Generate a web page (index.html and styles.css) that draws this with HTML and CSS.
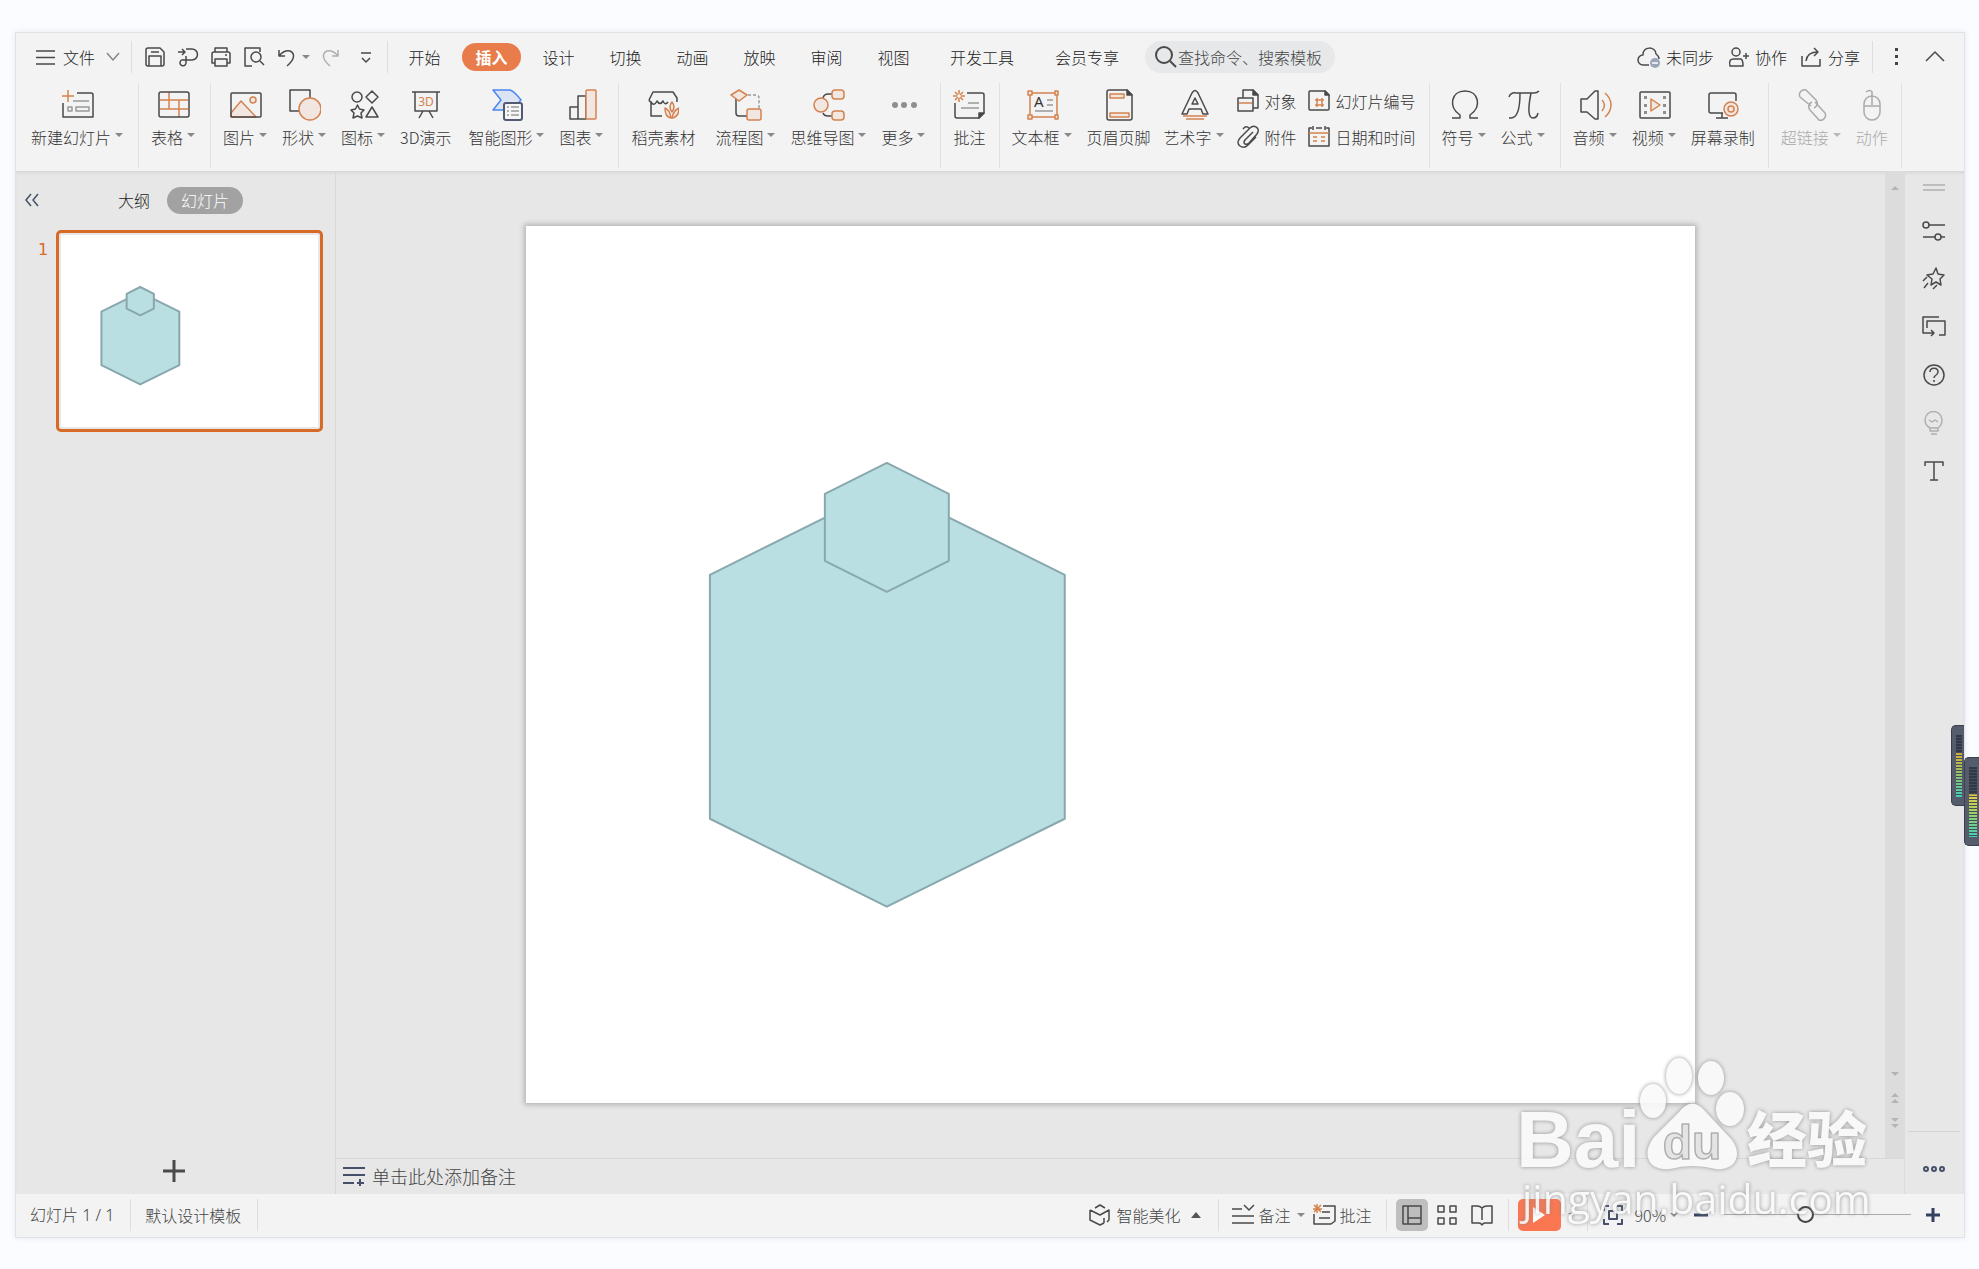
FILE: index.html
```html
<!DOCTYPE html>
<html lang="zh-CN">
<head>
<meta charset="utf-8">
<title>演示文稿</title>
<link rel="stylesheet" href="styles.css">
</head>
<body>
<svg class="defs" aria-hidden="true">
  <symbol id="drawing" viewBox="0 0 1170 877">
    <path class="shape" d="M361 261 539 349V593L361 681 184 593V349Z"/>
    <path class="shape" d="M361 237 423 268V335L361 366 299 335V268Z"/>
  </symbol>
</svg>

<div class="window">
  <header class="topbar">
    <button class="file"><svg class="i24" viewBox="0 0 24 24"><path d="M2 6H21M2 12.500H21M2 19H21"/></svg><span>文件</span><svg class="i16 mute" viewBox="0 0 16 16"><path d="M2 4 8 11 14 4"/></svg></button>
    <span class="sep"></span>
    <div class="quick">
      <button aria-label="保存"><svg class="i24" viewBox="0 0 24 24"><path d="M5 3H17L21 7V19Q21 21 19 21H5Q3 21 3 19V5Q3 3 5 3ZM6 21V11H18V21M8 7H16"/></svg></button>
      <button aria-label="输出"><svg class="i24" viewBox="0 0 24 24"><path d="M2 7H9M6 4 9 7 6 10M10 4H16A5 5 0 0 1 16 15H8A3 3 0 1 0 10 18V11"/></svg></button>
      <button aria-label="打印"><svg class="i24" viewBox="0 0 24 24"><path d="M6 7V3H18V7M6 18H3V9Q3 7 5 7H19Q21 7 21 9V18H18M6 14H18V21H6ZM16 10H18"/></svg></button>
      <button aria-label="打印预览"><svg class="i24" viewBox="0 0 24 24"><path d="M10 21H3V3H18V7M18 16 22 20"/><circle cx="14" cy="12" r="5"/></svg></button>
      <button class="undo" aria-label="撤销"><svg class="i24" viewBox="0 0 24 24"><path d="M4 5V11H10M4 11Q9 5 15 6C21 9 19 15 12 21"/></svg><i class="caret"></i></button>
      <button class="mute" aria-label="恢复"><svg class="i24" viewBox="0 0 24 24"><path d="M19 5V11H13M19 11Q14 5 8 6C2 9 4 15 11 21"/></svg></button>
      <button class="expand" aria-label="自定义"><svg class="i24" viewBox="0 0 24 24"><path d="M7 8H17M8 13 12 17 16 13"/></svg></button>
    </div>
    <span class="sep"></span>
    <nav class="tabs">
      <button>开始</button><button class="on">插入</button><button>设计</button><button>切换</button><button>动画</button><button>放映</button><button>审阅</button><button>视图</button><button class="wide">开发工具</button><button class="wide">会员专享</button>
    </nav>
    <label class="search"><svg class="i24" viewBox="0 0 24 24"><g class="thick"><circle cx="10" cy="10" r="8"/><path d="M16 16 22 22"/></g></svg><input type="text" placeholder="查找命令、搜索模板" aria-label="查找命令、搜索模板"></label>
    <div class="account">
      <button><svg class="i24" viewBox="0 0 24 24"><path d="M12 20H6A5 5 0 0 1 6 10C5 1 19 1 19 9Q22 11 22 14"/><circle class="badge" cx="18" cy="18" r="5"/><path class="wline" d="M15 18H21"/></svg>未同步</button>
      <button><svg class="i24" viewBox="0 0 24 24"><circle cx="10" cy="7" r="4"/><path d="M15 21H4Q2 13 9 14H15Q17 15 17 21ZM17 11H23M20 8V14"/></svg>协作</button>
      <button><svg class="i24" viewBox="0 0 24 24"><path d="M3 11V21H21V14M7 16Q8 7 19 7M15 3 19 7 15 11"/></svg>分享</button>
      <span class="sep"></span>
      <button class="dots" aria-label="更多"><svg class="i24" viewBox="0 0 24 24"><path class="dot" d="M11 3h3v3h-3zM11 10h3v3h-3zM11 17h3v3h-3z"/></svg></button>
      <button aria-label="收起"><svg class="i24" viewBox="0 0 24 24"><path d="M3 16 12 7 21 16"/></svg></button>
    </div>
  </header>

  <div class="ribbon">
    <div class="group">
      <button class="tool"><svg class="i32" viewBox="0 0 32 32"><path d="M15 4H29Q31 4 31 6V28H1V14"/><path class="g" d="M11 12H27M6 18H10V22H6ZM14 18H27V22H14Z"/><path class="o" d="M6 1V13M0 7H12"/></svg><span>新建幻灯片<i class="caret"></i></span></button>
    </div>
    <div class="group">
      <button class="tool"><svg class="i32" viewBox="0 0 32 32"><path class="o" d="M2 11H30M2 20H30M11 3V20M21 11V28"/><rect x="1" y="3" width="30" height="25" rx="2"/></svg><span>表格<i class="caret"></i></span></button>
    </div>
    <div class="group">
      <button class="tool"><svg class="i32" viewBox="0 0 32 32"><path class="of" d="M1 24 11 12 26 28H1Z"/><circle class="of" cx="23" cy="11" r="3"/><rect x="1" y="4" width="30" height="24" rx="1"/></svg><span>图片<i class="caret"></i></span></button>
      <button class="tool"><svg class="i32" viewBox="0 0 32 32"><path d="M1 1H21V22H1Z"/><circle class="of" cx="21" cy="20" r="11"/></svg><span>形状<i class="caret"></i></span></button>
      <button class="tool"><svg class="i32" viewBox="0 0 32 32"><circle cx="9" cy="8" r="5"/><path d="M24 2 30 8 24 14 18 8ZM24 18 30 28H18ZM9.500 16 11.500 20 16 21 13 24 14 29 9.500 27 5 29 6 24 3 21 7.500 20Z"/></svg><span>图标<i class="caret"></i></span></button>
      <button class="tool mid"><svg class="i32" viewBox="0 0 32 32"><path d="M2 3H30M5 3V22H27V3M13 22 9 29M19 22 23 29"/><text class="ot" x="16" y="17" text-anchor="middle" font-size="12">3D</text></svg><span>3D演示</span></button>
      <button class="tool"><svg class="i32" viewBox="0 0 32 32"><path class="bl" d="M2 1H19Q23 2 30 11L21 21H2L10 11Z"/><rect class="doc" x="13" y="14" width="18" height="17" rx="2"/><path class="g" d="M16 18H18M20 18H28M16 22H18M20 22H28M16 26H18M20 26H28"/></svg><span>智能图形<i class="caret"></i></span></button>
      <button class="tool"><svg class="i32" viewBox="0 0 32 32"><path d="M4 18H12V30H4ZM12 30V7H20V30Z"/><rect class="of" x="20" y="1" width="10" height="29" rx="1"/></svg><span>图表<i class="caret"></i></span></button>
    </div>
    <div class="group">
      <button class="tool far"><svg class="i32" viewBox="0 0 32 32"><path d="M15 27H4V13Q1 12 3 9L6 3H26L30 9V13M4 13Q7 18 10 12Q13 17 16 12Q18 17 21 13"/><path class="of" d="M25 13Q29 18 25 23Q21 18 25 13ZM18 19Q23 21 24 29Q18 28 18 19ZM32 19Q32 28 25 29Q26 22 32 19Z"/></svg><span>稻壳素材</span></button>
      <button class="tool"><svg class="i32" viewBox="0 0 32 32"><path class="g dash" d="M18 6H26Q29 6 29 9V20"/><path d="M6 9V24Q6 27 9 27H17"/><path class="of" d="M9 1 17 6 9 12 1 6Z"/><rect class="of" x="17" y="20" width="14" height="11" rx="2"/></svg><span>流程图<i class="caret"></i></span></button>
      <button class="tool"><svg class="i32" viewBox="0 0 32 32"><path d="M10 9Q11 5 15 5H20M10 24Q11 27 15 27H20"/><circle class="of" cx="8" cy="16" r="7"/><rect class="of" x="19" y="1" width="12" height="9" rx="3"/><rect class="of" x="19" y="22" width="12" height="9" rx="3"/></svg><span>思维导图<i class="caret"></i></span></button>
      <button class="tool"><svg class="i32" viewBox="0 0 32 32"><g class="gs"><circle cx="7" cy="16" r="3"/><circle cx="16" cy="16" r="3"/><circle cx="26" cy="16" r="3"/></g></svg><span>更多<i class="caret"></i></span></button>
    </div>
    <div class="group">
      <button class="tool"><svg class="i32" viewBox="0 0 32 32"><path d="M14 4H29Q31 4 31 6V24L26 29H4Q2 29 2 27V14"/><path class="solid" d="M31 24H26V29Z"/><path class="g" d="M15 14H26M8 19H26"/><path class="o" d="M6 1V5M6 9V13M0 7H4M8 7H12M2 3 5 6M10 3 7 6M2 11 5 8M10 11 7 8"/></svg><span>批注</span></button>
    </div>
    <div class="group">
      <button class="tool"><svg class="i32" viewBox="0 0 32 32"><rect class="o" x="3" y="4" width="27" height="24"/><path class="of" d="M1 2H5V6H1ZM28 2H31V6H28ZM1 26H5V30H1ZM28 26H31V30H28Z"/><text class="kt" x="7" y="18" font-size="15">A</text><path class="g" d="M20 11H26M20 16H26M8 22H26"/></svg><span>文本框<i class="caret"></i></span></button>
      <button class="tool"><svg class="i32" viewBox="0 0 32 32"><path d="M6 1H24L29 6V29Q29 31 27 31H6Q4 31 4 29V3Q4 1 6 1Z"/><path class="solid" d="M24 1V6H29Z"/><path class="of" d="M7 5H21V9H7ZM7 24H26V28H7Z"/></svg><span>页眉页脚</span></button>
      <button class="tool"><svg class="i32" viewBox="0 0 32 32"><path d="M3 25 13 4Q16 -1 19 4L29 25H24L22 20H10L8 25ZM16 9 19 15H13Z"/><path class="o" d="M4 27H28M7 30H25"/></svg><span>艺术字<i class="caret"></i></span></button>
      <div class="minis">
        <button><svg class="i24" viewBox="0 0 24 24"><path d="M7 9V1H17L22 6V19H17M2 9H17V22H2Z"/><path class="solid" d="M17 1V6H22Z"/><path class="o" d="M3 14H16"/></svg>对象</button>
        <button><svg class="i24" viewBox="0 0 24 24"><path d="M18 2H3Q2 2 2 3V20Q2 21 3 21H21Q22 21 22 20V6Z"/><path class="solid" d="M18 2V6H22Z"/><path class="o" d="M10 9V18M15 9V18M8 11H17M8 16H17"/></svg>幻灯片编号</button>
        <button><svg class="i24" viewBox="0 0 24 24"><path d="M17 7 9 15Q7 18 9 19Q11 20 13 18L21 9Q24 4 20 2Q17 0 14 3L4 13Q0 18 4 21Q8 24 12 20L20 12M13 3Q10 0 7 4"/></svg>附件</button>
        <button><svg class="i24" viewBox="0 0 24 24"><path d="M5 3H2V21H22V3H19M9 3H15M6 1V5M18 1V5"/><path class="o" d="M2 8H22M6 12H10M14 12H18M6 16H10M14 16H18"/></svg>日期和时间</button>
      </div>
    </div>
    <div class="group">
      <button class="tool"><svg class="i32" viewBox="0 0 32 32"><path d="M3 29H11V26C-1 18 2 2 16 2S33 18 21 26V29H29"/></svg><span>符号<i class="caret"></i></span></button>
      <button class="tool"><svg class="i32" viewBox="0 0 32 32"><path d="M1 8Q3 3 8 4H26Q29 4 31 2M12 4Q12 29 3 29H1M23 4Q18 29 25 29Q29 29 30 24"/></svg><span>公式<i class="caret"></i></span></button>
    </div>
    <div class="group">
      <button class="tool"><svg class="i32" viewBox="0 0 32 32"><path d="M1 10H7L15 2H18V30H15L7 23H1Z"/><path class="o" d="M22 11Q27 16 22 22M25 4C33 11 33 21 25 28"/></svg><span>音频<i class="caret"></i></span></button>
      <button class="tool"><svg class="i32" viewBox="0 0 32 32"><rect x="1" y="3" width="30" height="26" rx="1"/><path class="of" d="M12 10V22L21 16Z"/><path class="gs" d="M5 7H8V10H5ZM5 15H8V18H5ZM5 22H8V25H5ZM24 7H27V10H24ZM24 15H27V18H24ZM24 22H27V25H24Z"/></svg><span>视频<i class="caret"></i></span></button>
      <button class="tool"><svg class="i32" viewBox="0 0 32 32"><path d="M16 24H4Q2 24 2 22V6Q2 4 4 4H27Q29 4 29 6V12M15 24V29M9 29H21"/><circle class="of" cx="24" cy="20" r="7"/><circle class="o" cx="24" cy="20" r="3"/></svg><span>屏幕录制</span></button>
    </div>
    <div class="group off">
      <button class="tool" disabled><svg class="i32" viewBox="0 0 32 32"><path d="M15 17 4 8A5 5 0 0 1 10 1L20 11A5 5 0 0 1 18 19M19 13 29 24A5 5 0 0 1 23 31L14 21A5 5 0 0 1 16 13"/></svg><span>超链接<i class="caret"></i></span></button>
      <button class="tool" disabled><svg class="i32" viewBox="0 0 32 32"><path d="M16 16V3Q14 0 10 3M8 17H24"/><rect x="8" y="7" width="16" height="24" rx="8"/></svg><span>动作</span></button>
    </div>
  </div>

  <main class="work">
    <aside class="side">
      <div class="sidehead">
        <button class="fold" aria-label="折叠"><svg class="i16 navy" viewBox="0 0 16 16"><path d="M7 2 2 8 7 14M14 2 9 8 14 14"/></svg></button>
        <button>大纲</button><button class="pill">幻灯片</button>
      </div>
      <div class="thumbrow"><span class="num">1</span><div class="thumb"><svg viewBox="0 0 1170 877"><use href="#drawing"/></svg></div></div>
      <button class="add" aria-label="新建"><svg class="i24" viewBox="0 0 24 24"><path d="M12 1V23M1 12H23"/></svg></button>
    </aside>
    <section class="editor">
      <div class="stage">
        <div class="canvas"><svg class="slide" viewBox="0 0 1170 877"><use href="#drawing"/></svg></div>
        <div class="scroll"><svg class="i16" viewBox="0 0 16 16"><path d="M4 10 8 6 12 10Z"/></svg>
          <span class="downs"><svg class="i16" viewBox="0 0 16 16"><path d="M4 6 8 10 12 6Z"/></svg><svg class="i16" viewBox="0 0 16 16"><path d="M4 6 8 2 12 6ZM4 12 8 8 12 12Z"/></svg><svg class="i16" viewBox="0 0 16 16"><path d="M4 2 8 6 12 2ZM4 8 8 12 12 8Z"/></svg></span>
        </div>
      </div>
      <div class="notes"><svg class="i24" viewBox="0 0 24 24"><g class="navyline"><path d="M1 4H23M1 11H23M1 19H12M15 19H22M18 15V22"/></g></svg>单击此处添加备注</div>
    </section>
    <aside class="rail">
      <svg class="i24 mute" viewBox="0 0 24 24"><path d="M1 9H23M1 14H23"/></svg>
      <button aria-label="属性"><svg class="i24" viewBox="0 0 24 24"><path d="M7 6H23M1 18H13M19 18H23"/><circle cx="4" cy="6" r="3"/><circle cx="16" cy="18" r="3"/></svg></button>
      <button aria-label="动画"><svg class="i24" viewBox="0 0 24 24"><path d="M14 1 16 7 22 8 18 12 19 18 14 15 9 18 10 12 5 8 11 7ZM5 10 1 14M6 16 2 21M15 18 11 22"/></svg></button>
      <button aria-label="切换"><svg class="i24" viewBox="0 0 24 24"><path d="M17 2H1V18H12M9 15 12 18 9 21M5 13V6H23V20H17"/></svg></button>
      <button aria-label="帮助"><svg class="i24" viewBox="0 0 24 24"><circle cx="12" cy="12" r="10"/><path d="M8 9C8 4 16 4 16 9Q16 11 13 13Q12 14 12 15M12 17V19"/></svg></button>
      <button class="mute" aria-label="提示"><svg class="i24" viewBox="0 0 24 24"><path d="M8 17Q3 14 3 9A8 8 0 0 1 20 9Q20 14 16 17ZM8 17V20H16V17M9 23H15M7 9 10 11 13 9 16 11"/></svg></button>
      <button aria-label="字体"><svg class="i24" viewBox="0 0 24 24"><path d="M3 7V3H21V7M12 3V21M8 21H16"/></svg></button>
      <button class="railmore" aria-label="更多"><svg class="i24" viewBox="0 0 24 24"><g class="navyline"><circle cx="4" cy="12" r="2"/><circle cx="12" cy="12" r="2"/><circle cx="20" cy="12" r="2"/></g></svg></button>
    </aside>
  </main>

  <footer class="status">
    <span class="page">幻灯片 1 / 1</span><span class="sep"></span><span>默认设计模板</span><span class="sep"></span>
    <div class="ctl">
      <button class="beauty"><svg class="i24" viewBox="0 0 24 24"><path d="M7 5 12 2 17 5M2 7 12 12 21 7V17L19 19M2 7V17L12 22 16 20M16 20V15"/></svg>智能美化<i class="caret up"></i></button>
      <span class="sep"></span>
      <button class="memo"><svg class="i24" viewBox="0 0 24 24"><path d="M1 6H11M1 13H23M1 20H23M13 2 18 7 23 2"/></svg>备注<i class="caret"></i></button>
      <button class="comment"><svg class="i24" viewBox="0 0 24 24"><path d="M11 3H23V18L19 21H2V11M10 9H18M7 15H18"/><path class="o" d="M5 1V10M1 6H10M2 2 9 9M9 2 2 9"/></svg>批注</button>
      <span class="sep"></span>
      <button class="view on" aria-label="普通视图"><svg class="i24" viewBox="0 0 24 24"><path d="M3 3H21V21H3ZM8 3V21M8 15H21"/></svg></button>
      <button class="view" aria-label="幻灯片浏览"><svg class="i24" viewBox="0 0 24 24"><path d="M3 3H9V9H3ZM15 3H21V9H15ZM3 15H9V21H3ZM15 15H21V21H15Z"/></svg></button>
      <button class="view" aria-label="阅读视图"><svg class="i24" viewBox="0 0 24 24"><path d="M12 5Q10 3 7 3H2V20H9Q11 20 12 22Q13 20 15 20H22V3H17Q14 3 12 5V17"/></svg></button>
      <span class="sep"></span>
      <button class="play" aria-label="播放"><svg class="i24" viewBox="0 0 24 24"><path d="M6 4V20L18 12Z"/></svg></button><i class="caret"></i>
      <span class="sep"></span>
      <button class="fit" aria-label="适应窗口"><svg class="i24" viewBox="0 0 24 24"><g class="navyline"><path d="M3 8V3H8M16 3H21V8M3 16V21H8M16 21H21V16M8 8H16V16H8Z"/></g></svg></button>
      <button class="pct">90%<i class="caret"></i></button>
      <button aria-label="缩小"><svg class="i16" viewBox="0 0 16 16"><path class="zoomline" d="M1 8H15"/></svg></button>
      <input class="zoom" type="range" min="0" max="100" value="43" aria-label="缩放">
      <button aria-label="放大"><svg class="i16" viewBox="0 0 16 16"><path class="zoomline" d="M1 8H15M8 1V15"/></svg></button>
    </div>
  </footer>
</div>

<div class="meter inner"><i></i></div>
<div class="meter outer"><i></i></div>

<svg class="mark" viewBox="0 0 370 190" aria-hidden="true">
  <text x="6" y="117" class="latin" font-size="80">Bai</text>
  <ellipse cx="143" cy="51" rx="13" ry="17"/><ellipse cx="169" cy="26" rx="13" ry="18"/><ellipse cx="201" cy="28" rx="13" ry="17"/><ellipse cx="220" cy="59" rx="14" ry="17"/>
  <path d="M170 61Q182 46 195 61L222 90C234 107 223 121 206 119Q182 113 160 119C138 121 131 104 144 87Z"/>
  <text x="182" y="109" class="du" text-anchor="middle" font-size="48">du</text>
  <text x="237" y="112" class="han" font-size="60">经验</text>
  <text x="12" y="164" class="site" font-size="41">jingyan.baidu.com</text>
</svg>
</body>
</html>
```
FILE: styles.css
```css
* { box-sizing: border-box; }
body {
  margin: 0;
  position: relative;
  min-height: 100vh;
  padding: 32px 14px 31px 15px;
  display: flex;
  background: #fbfcff;
  color: #222;
  font: 300 16px/24px "Noto Sans CJK SC", sans-serif;
  overflow-x: hidden;
}
button, input { font: inherit; color: inherit; }
button { display: flex; align-items: center; margin: 0; padding: 0; border: 0; background: none; white-space: nowrap; }
svg { display: block; flex: none; fill: none; stroke: #4a4a4a; stroke-width: 1.5; stroke-linejoin: round; }
.defs { position: absolute; width: 0; height: 0; }
.i16 { width: 16px; height: 16px; }
.i24 { width: 24px; height: 24px; }
.i32 { width: 32px; height: 32px; }
svg.mute, .mute svg { stroke: #b0b0b0; }
.file svg.mute { stroke: #888; }
.navy, .navyline { stroke: #46506a; }
.navyline { stroke-width: 2; }
.thick { stroke-width: 2; }
.solid { fill: #444; }
.dot { fill: #444; stroke: none; }
.g { stroke: #999; }
.gs { fill: #8e8e8e; stroke: none; }
.o { stroke: #d4824f; }
.of { stroke: #d4824f; fill: #f1e6e0; }
.ot { fill: #d4824f; stroke: none; font-family: "Noto Sans", sans-serif; font-weight: 400; }
.kt { fill: #333; stroke: none; font-family: "Noto Sans", sans-serif; font-weight: 400; }
.bl { stroke: #4a87f0; fill: #dce4f4; }
.doc { stroke: #505a70; fill: #f5f5f5; stroke-width: 2; }
.dash { stroke-dasharray: 3 2; }
.badge { fill: #9ba5b8; stroke: none; }
.wline { stroke: #fff; }
.shape { fill: #badfe2; stroke: #88a8ac; stroke-width: 2; vector-effect: non-scaling-stroke; }
.caret { display: inline-block; border: 4px solid transparent; border-top-color: #888; border-bottom: 0; }
.caret.up { border-top: 0; border-bottom: 6px solid #555; border-left-width: 5px; border-right-width: 5px; }
.sep { width: 1px; height: 32px; background: #dedede; flex: none; }

.window {
  flex: 1;
  min-width: 0;
  display: flex;
  flex-direction: column;
  border: 1px solid #e0e3e3;
  background: #f3f3f3;
  box-shadow: 0 0 6px #e6e9ee;
}

.topbar { display: flex; align-items: center; height: 48px; padding: 0 17px 0 18px; }
.file span { margin: 0 10px 0 5px; }
.file { margin-right: 10px; }
.quick { display: flex; gap: 9px; margin: 0 9px 0 11px; }
.quick .undo { gap: 3px; }
.quick .expand { margin-left: 2px; }
.tabs { display: flex; gap: 8px; margin-left: 7px; }
.tabs button { height: 28px; padding: 0 13px; border-radius: 14px; }
.tabs button:not(.wide) { width: 59px; justify-content: center; }
.tabs .wide { margin-left: 5px; padding: 0 14px; }
.tabs .on { background: #e87c4b; color: #fff; font-weight: 700; }
.search { display: flex; align-items: center; width: 190px; height: 32px; margin-left: 12px; padding: 0 9px; border-radius: 16px; background: #e6e8ea; }
.search input { flex: 1; min-width: 0; padding: 0; border: 0; background: none; outline: 0; }
.search input::placeholder { color: #444; opacity: 1; }
.account { display: flex; align-items: center; margin-left: auto; gap: 12px; }
.account button { gap: 5px; }
.account .dots { margin: 0 3px 0 -1px; }

.ribbon { display: flex; height: 90px; padding: 2px 0 3px 3px; }
.group { display: flex; align-items: flex-start; gap: 13px; padding: 6px 13px 0 12px; border-right: 1px solid #e0e0e0; }
.tool { flex-direction: column; gap: 4px; color: #333; }
.tool.mid { margin-right: 4px; }
.tool.far { margin-right: 7px; }
.tool span { display: flex; align-items: center; }
.tool .caret { margin: 0 2px 4px 4px; }
.minis { display: grid; grid-template-columns: auto auto; gap: 12px 10px; padding-top: 0; margin-left: -3px; }
.minis button { gap: 5px; color: #333; }
.off .tool { color: #aaa; }
.off svg { stroke: #aaa; }
.off .caret { border-top-color: #b8b8b8; }

.work { flex: 1; display: flex; background: #e7e7e7; box-shadow: inset 0 3px 3px -1px #d6d6d6; }
.side { width: 320px; flex: none; display: flex; flex-direction: column; border-right: 1px solid #d8d8d8; padding: 15px 12px 11px 8px; }
.sidehead { display: flex; align-items: center; height: 28px; }
.fold { width: 77px; }
.sidehead button + button { margin-left: 17px; }
.sidehead .pill { height: 27px; padding: 0 14px; border-radius: 14px; background: #a2a2a2; color: #fff; }
.thumbrow { display: flex; gap: 8px; margin: 16px 0 auto 14px; }
.num { color: #d86a28; font: 16px/40px "DejaVu Sans", sans-serif; }
.thumb { flex: 1; padding: 2px; border: 3px solid #d86a28; border-radius: 5px; }
.thumb svg { width: 100%; background: #fff; }
.add { align-self: center; }
.add svg { stroke-width: 3; }
.editor { flex: 1; min-width: 0; display: flex; flex-direction: column; }
.stage { flex: 1; display: flex; border-bottom: 1px solid #d8d8d8; }
.canvas { flex: 1; display: flex; align-items: center; justify-content: center; }
.slide { width: 75.5%; background: #fff; box-shadow: 0 0 5px 2px #b4b4b4; }
.scroll { width: 19px; background: #dcdcdc; display: flex; flex-direction: column; align-items: center; justify-content: space-between; padding: 9px 0 26px; }
.scroll svg { fill: #b4b4b4; stroke: none; }
.downs { display: grid; gap: 9px; }
.notes { display: flex; align-items: center; gap: 6px; height: 35px; padding: 0 0 2px 6px; color: #444; font-size: 18px; }
.rail { width: 60px; flex: none; display: flex; flex-direction: column; align-items: center; gap: 24px; padding: 5px 2px 13px 0; border-left: 1px solid #dcdcdc; }
.rail > svg { margin-bottom: -5px; }
.railmore { margin-top: auto; padding: 25px 14px 0; border-top: 1px solid #d4d4d4; }

.status { display: flex; align-items: center; height: 43px; padding: 0 23px 2px 14px; color: #444; }
.status > .sep { margin: 0 14px 0 16px; }
.page { font-family: "Noto Sans", "Noto Sans CJK SC", sans-serif; }
.ctl { display: flex; align-items: center; margin-left: auto; }
.ctl button { gap: 4px; }
.beauty .caret { margin-left: 7px; }
.beauty { margin-right: 17px; }
.memo { margin: 0 7px 0 12px; }
.memo svg { margin-right: -1px; }
.memo .caret { margin-left: 2px; }
.comment { margin-right: 14px; }
.view { width: 32px; height: 32px; justify-content: center; border-radius: 5px; margin-left: 3px; }
.view.on { background: #bebebe; margin-left: 9px; }
.view + .sep { margin: 0 9px 0 10px; }
.play { width: 43px; height: 32px; justify-content: center; border-radius: 5px; background: #fb7752; margin-right: 7px; }
.play svg { fill: #fff; stroke: none; }
.play ~ .sep { margin: 0 13px 0 11px; }
.fit { margin-right: 10px; }
.pct { margin-right: 15px; }
.zoomline { stroke: #34415e; stroke-width: 3; }
.zoom { appearance: none; width: 187px; height: 18px; margin: 0 14px 0 15px; background: linear-gradient(#aaa, #aaa) center / 100% 1px no-repeat; }
.zoom::-webkit-slider-thumb { appearance: none; width: 17px; height: 17px; border: 2px solid #444; border-radius: 50%; background: #f3f3f3; }

.meter { position: absolute; background: #555c6c; border: 1px solid #3c404c; border-right: 0; border-radius: 5px 0 0 5px; padding: 9px 2px 8px 4px; display: flex; }
.meter i { flex: 1; background: repeating-linear-gradient(#0000 0 2px, #474c59 2px 3px), linear-gradient(#333845 0 28%, #d4b040 30%, #a9bd58 55%, #40cdb8); }
.meter.inner { right: 15px; top: 725px; width: 13px; height: 81px; }
.meter.outer { right: 0; top: 757px; width: 15px; height: 89px; }
.meter.outer i { background: repeating-linear-gradient(#0000 0 2px, #474c59 2px 3px), linear-gradient(#333845 0 38%, #e4cc48 40%, #a8d060 62%, #40cdb8); }

.mark { position: absolute; right: 99px; bottom: 29px; width: 370px; height: 190px; fill: #fafafa; stroke: none; filter: drop-shadow(0 0 2px #888); opacity: .9; pointer-events: none; }
.latin { font-family: "Liberation Sans", sans-serif; font-weight: 700; }
.du { font-family: "Liberation Sans", sans-serif; font-weight: 700; fill: #e4e4e4; stroke: #aaa; }
.han { font-family: "Noto Sans CJK SC", sans-serif; font-weight: 900; }
.site { font-family: "Open Sans", sans-serif; font-weight: 400; }
```
